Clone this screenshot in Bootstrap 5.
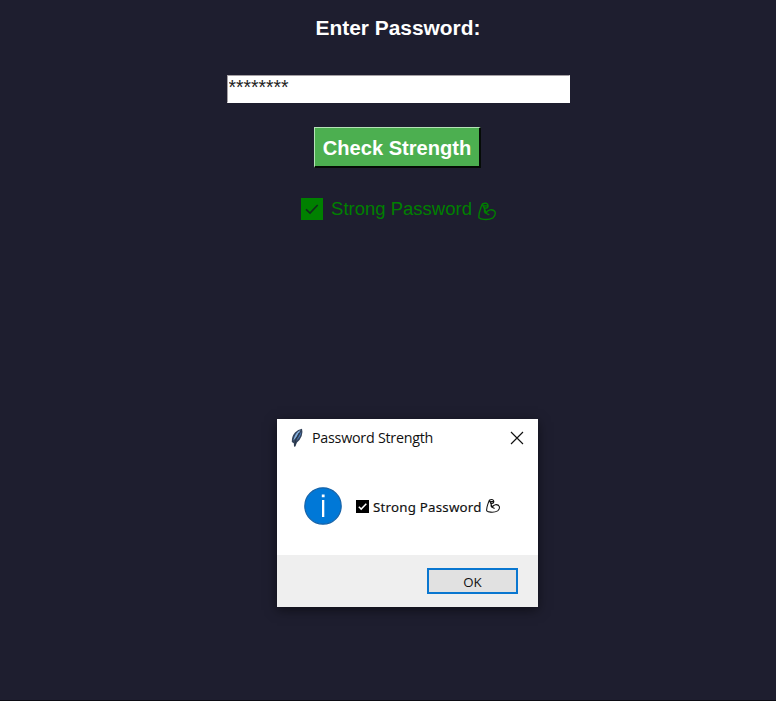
<!DOCTYPE html>
<html lang="en">
<head>
<meta charset="utf-8">
<meta name="viewport" content="width=device-width, initial-scale=1">
<title>Password Strength</title>
<link href="https://cdn.jsdelivr.net/npm/bootstrap@5.3.0/dist/css/bootstrap.min.css" rel="stylesheet">
<style>
  body { background: #1e1e2f; font-family: "Liberation Sans", Arial, sans-serif; height: 701px; overflow: hidden; }
  .app-main { width: 776px; height: 701px; padding: 15px 0 0 20px; border-bottom: 1px solid #0c0c14; }
  .prompt { font-size: 20.9px; line-height: 26px; color: #fff; }
  .entry { width: 343px; height: 28px; margin-top: 34px; padding: 1px 2px 3px 1px; font-size: 19.3px; line-height: 22px; color: #222;
    border: 1px solid #fff; border-top-color: #a5a0a4; border-left-color: #a5a0a4; background: #fff; outline: 0; }
  .check-btn { width: 167px; height: 41px; margin-top: 24px; margin-right: 1px; padding: 1px 0 0; font-size: 20.1px; line-height: 38px; color: #fff;
    background: #4caf50; border: 1px solid; border-color: #b5e3b7 #050b06 #050b06 #b5e3b7; border-right-width: 2px; border-bottom-width: 2px; }
  .result { margin-top: 28px; margin-left: 1px; color: #008000; font-size: 18.5px; line-height: 26px; }
  .result-text { margin: 0 6px 0 8px; }
  .dialog-win { left: 277px; top: 419px; width: 261px; height: 188px; box-shadow: 0 3px 11px rgba(0,0,0,.5);
    font-family: "Open Sans", "Noto Sans", sans-serif; color: #111; }
  .title-row { height: 38px; padding: 0 14px 0 12px; }
  .title-text { font-size: 14.3px; line-height: 38px; margin-left: 7px; letter-spacing: -.25px; }
  .message-row { height: 98px; padding: 0 0 0 27px; }
  .message-check { margin-left: 14px; }
  .message-text { font-family: "Noto Sans", sans-serif; font-size: 13.3px; line-height: 20px; margin: 1px 4px 0 4px; letter-spacing: .22px; -webkit-text-stroke: .15px #111; }
  .action-row { height: 52px; background: #efefef; padding-right: 20px; }
  .ok-btn { width: 91px; height: 26px; border: 2px solid #0a77d0; background: #e1e1e1; font-size: 13.3px; line-height: 24px; color: #111; }
</style>
<script src="https://cdn.jsdelivr.net/npm/bootstrap@5.3.0/dist/js/bootstrap.bundle.min.js"></script>
</head>
<body>
<svg class="d-none" aria-hidden="true">
  <symbol id="flex-arm" viewBox="0 0 18 18">
    <path d="M4.3 1.5Q6.4.4 8.6.9 10.3 1.7 10 3.9L9.4 5.2Q8 6 6.6 5.3L6.5 9.2Q7 10.7 8.6 10.8M8.3 10.6Q9 8 12 7.3 16 6.8 17.2 9.8 17.7 13.2 15 15.3 11.5 17.3 6 16.9 2.5 16.7.9 15.2.6 11.5 2.1 7.5 3 4.5 4.3 1.5ZM6.2 3.4 9.6 3.1M8.6 10.8Q9.4 11.9 10.8 12" fill="none" stroke="currentColor" stroke-width="1.35" stroke-linecap="round" stroke-linejoin="round"/>
  </symbol>
</svg>

<main class="app-main d-flex flex-column align-items-center">
  <label class="prompt fw-bold" for="pw">Enter Password:</label>
  <input class="entry rounded-0" id="pw" type="text" value="********">
  <button class="check-btn btn rounded-0 fw-bold" type="button">Check Strength</button>
  <div class="result d-flex align-items-center">
    <svg width="22" height="22" viewBox="0 0 22 22"><path fill="#008000" d="M0 0h22v22H0z"/><path d="M5 11.3 9 15 16.7 7" fill="none" stroke="#102c1c" stroke-width="1.7"/></svg>
    <span class="result-text text-nowrap">Strong Password</span>
    <svg width="18" height="19" class="mt-1" preserveAspectRatio="none"><use href="#flex-arm"/></svg>
  </div>
</main>

<section class="dialog-win position-absolute bg-white" role="dialog" aria-label="Password Strength">
  <div class="title-row d-flex align-items-center">
    <svg width="16" height="20" viewBox="0 0 16 20"><path d="M13 .8Q14 3.5 12.7 8 11 12.2 8 14.5L6.3 18.6 5 18.2 4.8 15.3 2.8 14Q2.5 8.5 6 4.5 9 1.3 13 .8Z" fill="#34445c"/><path d="M11.5 2Q6.3 4.3 4.3 12.5 8.3 9 11.5 2Z" fill="#86b2e0"/><path d="M12.3 3.6Q12 9.3 6.6 13.3 10 8.8 12.3 3.6Z" fill="#4f7fbe"/><path d="M10 5Q6.5 10 5.6 18.6" fill="none" stroke="#25303f" stroke-width=".8"/></svg>
    <span class="title-text text-nowrap">Password Strength</span>
    <svg class="ms-auto" width="14" height="14" viewBox="0 0 14 14"><path d="M1 1 13 13M13 1 1 13" stroke="#111" stroke-width="1.15"/></svg>
  </div>
  <div class="message-row d-flex align-items-center">
    <svg width="38" height="38" viewBox="0 0 38 38"><circle cx="19" cy="19" r="18.2" fill="#0078d7" stroke="#1763a8" stroke-width="1.2"/><path d="M17.8 7.5h2.8v2.8h-2.8zM18 13h2.3v17H18z" fill="#fff"/></svg>
    <svg class="message-check" width="13" height="13" viewBox="0 0 13 13"><path d="M0 0h13v13H0z"/><path d="M2.8 6.7 5.2 9.1 10.3 3.8" fill="none" stroke="#fff" stroke-width="1.5"/></svg>
    <span class="message-text text-nowrap">Strong Password</span>
    <svg width="14" height="14"><use href="#flex-arm"/></svg>
  </div>
  <div class="action-row d-flex align-items-center justify-content-end">
    <button class="ok-btn btn rounded-0 p-0" type="button">OK</button>
  </div>
</section>
</body>
</html>
